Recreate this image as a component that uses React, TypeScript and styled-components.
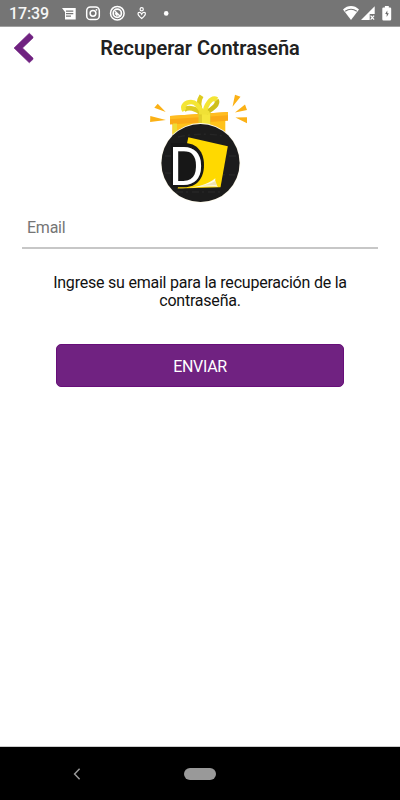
import React from "react";
import styled, { createGlobalStyle } from "styled-components";

const GlobalStyle = createGlobalStyle`
  * { box-sizing: border-box; }
  html, body, #root { height: 100%; margin: 0; }
  body { background: #fff; font-family: Roboto, "Liberation Sans", sans-serif; }
`;

const Screen = styled.div`
  width: 400px;
  height: 800px;
  display: flex;
  flex-direction: column;
  background: #fff;
  overflow: hidden;
`;

const StatusBar = styled.div`
  height: 27px;
  flex: none;
  display: flex;
  justify-content: space-between;
  background: #757575;
  border-bottom: 1px solid #a0a0a0;
  color: #fff;
`;

const StatusGroup = styled.div`
  display: flex;
`;

const Clock = styled.time`
  width: 50px;
  padding-left: 9px;
  font-size: 16px;
  line-height: 28px;
  font-weight: 500;
  letter-spacing: -0.15px;
  color: #f6f6f6;
`;

const Header = styled.header`
  height: 43px;
  flex: none;
  display: grid;
  grid-template-columns: 50px 300px 50px;
  align-items: center;
`;

const BackButton = styled.button`
  width: 50px;
  height: 43px;
  padding: 0;
  border: 0;
  background: none;
  display: flex;
`;

const Title = styled.h1`
  margin: 0;
  text-align: center;
  font-size: 20px;
  line-height: 43px;
  font-weight: 600;
  color: #212121;
  white-space: nowrap;
`;

const Content = styled.main`
  flex: 1;
  display: flex;
  flex-direction: column;
  align-items: center;
  padding: 20px 22px 0;
  border-bottom: 1px solid #ccc;
`;

const EmailInput = styled.input`
  width: 356px;
  height: 45px;
  padding: 4px 5px 0;
  border: 0;
  border-bottom: 2px solid #c7c7c7;
  outline: 0;
  background: none;
  font: 400 16px Roboto, "Liberation Sans", sans-serif;
  letter-spacing: -0.25px;
  &::placeholder { color: #757575; opacity: 1; }
`;

const Hint = styled.p`
  width: 320px;
  margin: 25px 0 0;
  text-align: center;
  font-size: 16px;
  letter-spacing: -0.22px;
  line-height: 18px;
  color: #111;
`;

const SubmitButton = styled.button`
  width: 288px;
  height: 43px;
  margin-top: 34px;
  padding: 2px 0 0;
  border: 1px solid #670f79;
  border-radius: 5px;
  background: #702281;
  color: #fff;
  font: 400 16px Roboto, "Liberation Sans", sans-serif;
  letter-spacing: -0.3px;
`;

const NavBar = styled.nav`
  height: 53px;
  flex: none;
  display: grid;
  grid-template-columns: 154px 92px 154px;
  align-items: center;
  justify-items: center;
  background: #000;
`;

const HomePill = styled.span`
  width: 32px;
  height: 12px;
  border-radius: 6px;
  background: #999;
`;

function NotificationIcons() {
  return (
    <svg width="130" height="26" viewBox="50 0 130 26" fill="none" stroke="#fff">
      <path d="M62 8h13.7v11.5H65V12z" fill="#fff" stroke="none" />
      <path d="M66 11.2h7.3M66 13.7h7.3M66 16.2h5" stroke="#757575" strokeWidth="1.2" />
      <rect x="86.7" y="7" width="12.6" height="12.6" rx="3.7" strokeWidth="1.5" />
      <circle cx="93" cy="13.3" r="2.9" strokeWidth="1.5" />
      <circle cx="96.5" cy="9.8" r="0.9" fill="#fff" stroke="none" />
      <circle cx="117.3" cy="13.2" r="6.8" strokeWidth="1.5" />
      <circle cx="117.3" cy="13.2" r="4.1" strokeWidth="1.7" />
      <path d="M115 11.2l5.5 5.3M115.2 13.3l2.2 2.4" strokeWidth="1.5" />
      <circle cx="141.7" cy="9.3" r="1.6" strokeWidth="1.2" />
      <path d="M138.2 12.8c-.8 1.6.4 3.3 3.5 5.7 3.1-2.4 4.3-4.1 3.5-5.7-1.2-.9-2.7-.3-3.5 1.4-.8-1.7-2.3-2.3-3.5-1.4" strokeWidth="1.2" />
      <circle cx="166.2" cy="13.4" r="2.3" fill="#fff" stroke="none" />
    </svg>
  );
}

function SystemIcons() {
  return (
    <svg width="65" height="26" viewBox="335 0 65 26">
      <path d="M343 9.4c4.7-4.5 11.3-4.5 16 0L351 20z" fill="#fff" />
      <path d="M345.2 11.2c3.6-2.5 8-2.5 11.6 0" fill="none" stroke="#757575" strokeWidth="1.1" />
      <path d="M374.7 6.3V14h-5v6H361z" fill="#fff" />
      <path d="M370.6 15.6l3.5 4m0-4l-3.5 4" stroke="#fff" strokeWidth="1.2" />
      <path d="M384.9 6h3.9v1.4h1.2q1.2 0 1.2 1.2v10.7q0 1.2-1.2 1.2h-6.5q-1.2 0-1.2-1.2V8.6q0-1.2 1.2-1.2h1.4z" fill="#fff" />
      <path d="M387.3 10.5L385.2 14h1.5v3l2.1-3.8h-1.5z" fill="#666" />
    </svg>
  );
}

function ChevronLeft() {
  return (
    <svg width="50" height="43" viewBox="0 27 50 43">
      <path d="M29.3 33.2L14 48l15.300 14.800 3.700-3.500V58L22.500 48 33 38v-1.300z" fill="#702281" stroke="#702281" strokeWidth=".6" strokeLinejoin="round" />
    </svg>
  );
}

function NavBack() {
  return (
    <svg width="8" height="12" viewBox="0 0 8 12">
      <path d="M6.6 .8L1.6 6l5 5.2" fill="none" stroke="#999" strokeWidth="1.5" />
    </svg>
  );
}

function GiftLogo() {
  return (
    <svg width="110" height="114" viewBox="145 90 110 114">
      <path d="M154.3 107.8l3.4-4 8 8.2zM150.3 116l-.2 6 15.8-2zM235 94.7l5.5 2-8 10.1zM245 104.5l2 5.4-12 2.7zM247 117.2v6l-11.6-5.8z" fill="#fbb116" />
      <path d="M172.3 123l53-4v33h-53z" fill="#ffc21b" />
      <path d="M170 116l58-4v8.8l-58 3.8z" fill="#faaa16" />
      <path d="M170 116l58-4v3.2l-58 4z" fill="#ffbd21" />
      <path d="M173 123.5h4v16h-4z" fill="#eedb35" />
      <path d="M198.500 112h12v20h-12z" fill="#e1ce2d" />
      <path d="M202 113h8v20h-8z" fill="#f5e63b" />
      <g fill="none" strokeWidth="4.6">
        <path d="M202 113C198.500 107 198 101 201.500 95.800" stroke="#decb20" />
        <path d="M216.500 100C219 104 213 109 206 112.500" stroke="#cebf1a" />
        <path d="M184 110C188 106.500 196 108 202 114" stroke="#ddcb20" />
        <path d="M184.500 110.500C181 106 186 102 191 102C197 102 200 108 202 113" stroke="#f4e534" />
        <path d="M205 113C205 106 211 96 217 99.500" stroke="#f4e534" />
      </g>
      <path d="M199 110.500q5-1.500 10 .5l1.500 3.500H199z" fill="#f0e136" />
      <circle cx="200.5" cy="163" r="39.9" fill="#fffbed" />
      <circle cx="200.5" cy="163" r="39.1" fill="#1c1c1c" />
      <path d="M178 137c14-3 30-4 44-1M165 156h71M165 173l70 2M176 192h48" fill="none" stroke="#303030" strokeWidth="1.5" strokeDasharray="7 3 2 4" opacity=".5" />
      <path d="M188.3 137.3l39.5 8.9-7.3 41-42.8 1.2z" fill="#ffd900" />
      <path d="M179 188.2c14 .2 29-3.200 36.300-10-.5 4 .8 6.800 2.700 8.500-13-1-25 1-39 1.500z" fill="#fffbe4" />
      <path d="M195 186.500c9-.8 15-2.500 20.500-5.500l1.500 4.300c-8-.5-14 .5-22 1.200z" fill="#efe3af" />
      <path d="M171 143h13c13 0 20 9 20 22s-7 22.300-20 22.300h-13z" fill="#171717" />
      <text x="168.500" y="184.500" fill="#fff" fontFamily="Roboto, sans-serif" fontSize="54.500">D</text>
    </svg>
  );
}

export default function App() {
  return (
    <>
      <GlobalStyle />
      <Screen>
        <StatusBar>
          <StatusGroup><Clock>17:39</Clock><NotificationIcons /></StatusGroup>
          <SystemIcons />
        </StatusBar>
        <Header>
          <BackButton aria-label="Volver"><ChevronLeft /></BackButton>
          <Title>Recuperar Contraseña</Title>
        </Header>
        <Content>
          <GiftLogo />
          <EmailInput type="email" placeholder="Email" />
          <Hint>Ingrese su email para la recuperación de la contraseña.</Hint>
          <SubmitButton type="button">ENVIAR</SubmitButton>
        </Content>
        <NavBar><NavBack /><HomePill /></NavBar>
      </Screen>
    </>
  );
}
